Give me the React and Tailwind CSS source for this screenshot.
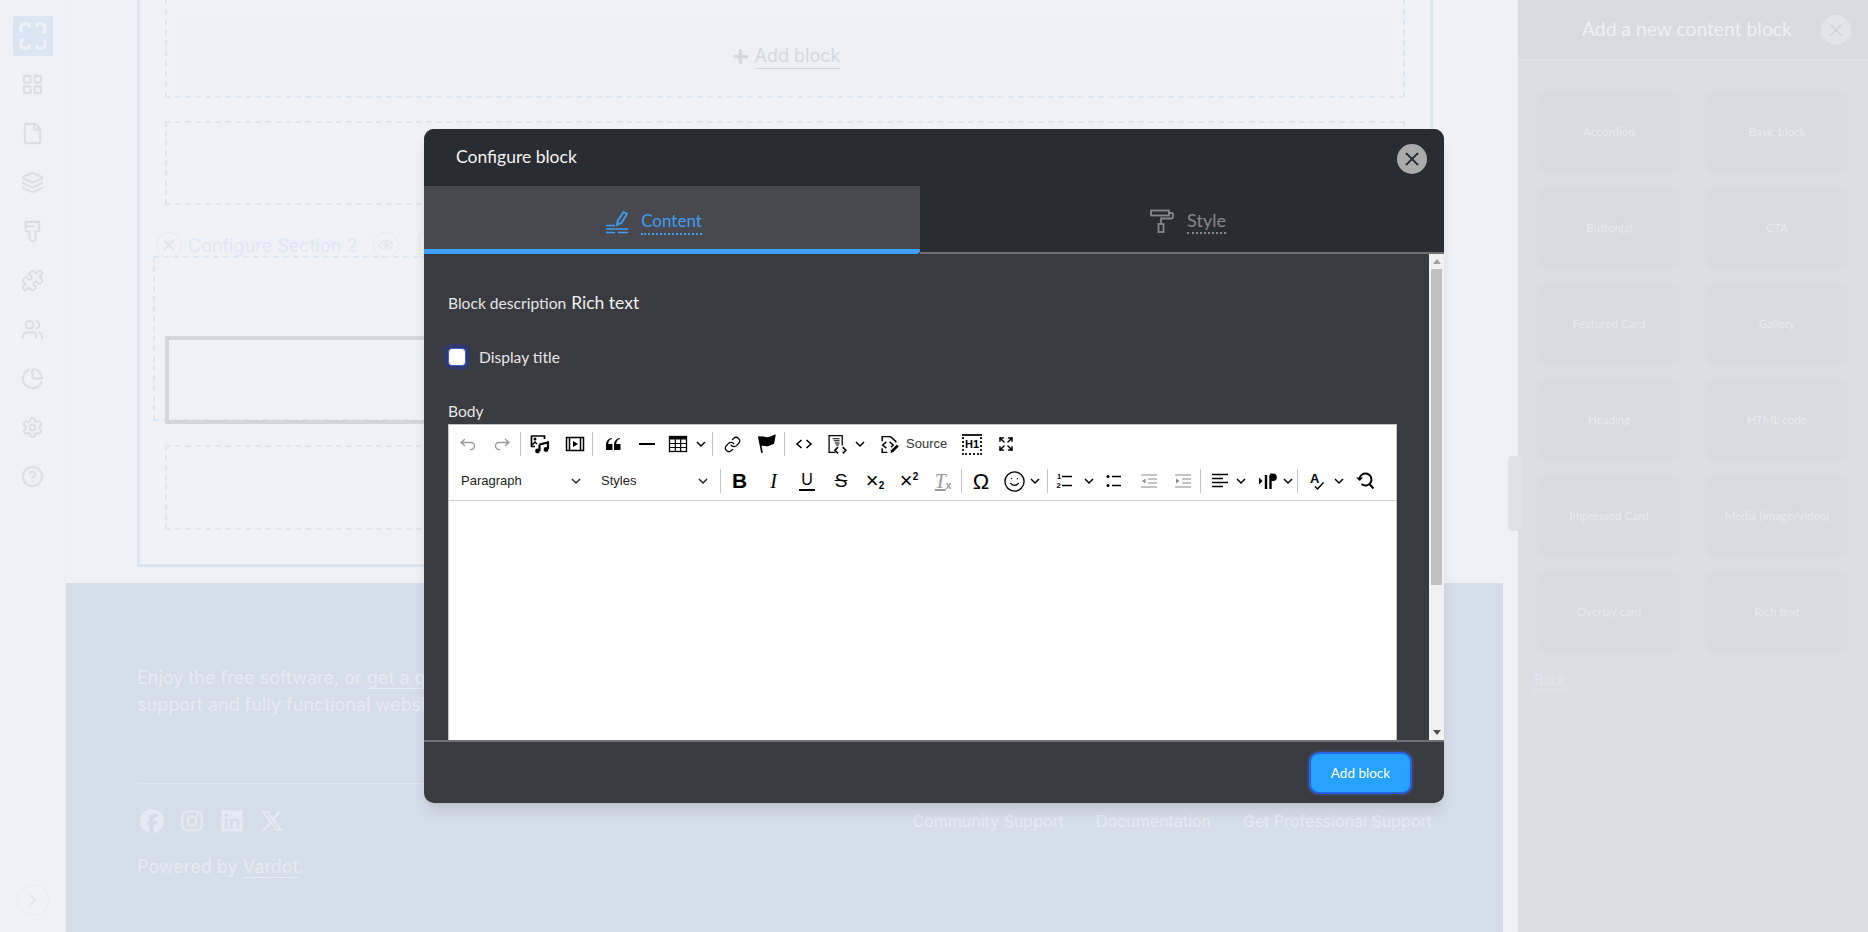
import React from 'react';
import { LayoutGrid, File, Layers, Puzzle, Users, ChartPie, Settings, CircleHelp, ChevronRight, Eye, X, Plus, Link, Expand, Smile } from 'lucide-react';
import { FaFacebook, FaInstagram, FaLinkedin, FaXTwitter } from 'react-icons/fa6';

const Ico = ({ children, className = 'w-5 h-5' }) => (
    <svg viewBox="0 0 20 20" fill="none" stroke="currentColor" strokeWidth="1.5" className={className}>{children}</svg>
);

const Chevron = () => (
    <svg viewBox="0 0 10 10" fill="none" stroke="currentColor" strokeWidth="1.5" className="w-[10px] h-[10px]"><path d="M1 3l4 4 4-4" /></svg>
);

const Sep = () => <span className="w-[3px] h-6 flex justify-center shrink-0"><span className="w-px h-full bg-[#c4c4c4]" /></span>;

const Tool = ({ className, children }) => (
    <span className={`flex items-center justify-center shrink-0 h-full ${className}`}>{children}</span>
);

const TopRow = () => (
    <div className="flex items-center h-[38px] pl-[2px]">
        <Tool className="w-[34px] text-[#9a9a9a]">
            <Ico><path d="M7 5L3 8.5l4 3.5M3.5 8.5H13a3.5 3.5 0 0 1 0 7h-1" strokeWidth="1.3" /></Ico>
        </Tool>
        <Tool className="w-[34px] text-[#9a9a9a]">
            <Ico><path d="M13 5l4 3.5-4 3.5M16.5 8.5H7a3.5 3.5 0 0 0 0 7h1" strokeWidth="1.3" /></Ico>
        </Tool>
        <Sep />
        <Tool className="w-[36px]">
            <Ico>
                <path d="M8 2H1.5v10.500H5M8 2h6.500v3" strokeWidth="1.700" />
                <path d="M2 11l3-3 2 2" strokeWidth="1.500" />
                <circle cx="5" cy="5" r="1.500" fill="currentColor" stroke="none" />
                <path d="M9.500 10.500L18 8.500V15M9.500 10.500V17" strokeWidth="2.200" />
                <circle cx="7.500" cy="17" r="2.400" fill="currentColor" stroke="none" />
                <circle cx="16" cy="15.500" r="2.400" fill="currentColor" stroke="none" />
            </Ico>
        </Tool>
        <Tool className="w-[33px]">
            <Ico>
                <rect x="1.500" y="3.500" width="17" height="13" strokeWidth="1.500" />
                <path d="M4.500 3.500v13M15.500 3.500v13" strokeWidth="1.500" />
                <path d="M8 7l5 3-5 3z" fill="currentColor" stroke="none" />
            </Ico>
        </Tool>
        <Sep />
        <Tool className="w-[38px]">
            <Ico>
                <path stroke="none" fill="currentColor" d="M3 10.423a6.5 6.5 0 0 1 6.056-6.408l.038.67C6.448 5.423 5.354 7.663 5.220 10H9c.552 0 .5.432.5.986v4.511c0 .554-.448.503-1 .503h-5c-.552 0-.5-.449-.5-1.003v-4.574zm8 0a6.5 6.5 0 0 1 6.056-6.408l.038.67c-2.646.739-3.74 2.979-3.873 5.315H17c.552 0 .5.432.5.986v4.511c0 .554-.448.503-1 .503h-5c-.552 0-.5-.449-.5-1.003v-4.574z" />
            </Ico>
        </Tool>
        <Tool className="w-[30px]">
            <Ico><path d="M2 10h16" strokeWidth="2" /></Ico>
        </Tool>
        <Tool className="w-[28px] pl-[3px]">
            <Ico>
                <rect x="1.500" y="2.500" width="17" height="15" strokeWidth="1.300" />
                <path d="M2 4h16" strokeWidth="3" />
                <path d="M2 9.500h16M2 13.500h16M7.300 5v12M12.700 5v12" strokeWidth="1.200" />
            </Ico>
        </Tool>
        <Tool className="w-[21px]"><Chevron /></Tool>
        <Sep />
        <Tool className="w-[36px]"><Link className="w-[17px] h-[17px]" strokeWidth={1.7} /></Tool>
        <Tool className="w-[33px]">
            <Ico className="w-[22px] h-[22px]">
                <path d="M2.500 3l3 15" strokeWidth="1.500" />
                <path stroke="none" fill="currentColor" d="M2.500 3.500C6 1.500 9 5 12.500 3.500c2-.8 3.500-1.500 5.500-2.300l-1.500 8.500c-2.500 1-4 1.800-6 2.300-2.500.5-4-1-6.500 0z" />
            </Ico>
        </Tool>
        <Sep />
        <Tool className="w-[36px]">
            <Ico><path d="M7.500 6L3 10l4.500 4M12.500 6L17 10l-4.500 4" strokeWidth="1.600" /></Ico>
        </Tool>
        <Tool className="w-[30px]">
            <Ico className="w-[21px] h-[21px]">
                <path d="M8 17.500H2V1.500h12.500V11" strokeWidth="1.200" />
                <path d="M5.500 4.500h6.500M6.500 6.500h5.500M7.500 8.500h4.500M8.500 10.500h3" strokeWidth="1" />
                <path d="M10.500 12.500L7.500 15.500l3 3M15 12.500l3 3-3 3" strokeWidth="1.500" />
            </Ico>
        </Tool>
        <Tool className="w-[16px]"><Chevron /></Tool>
        <Tool className="w-[38px] pl-[4px]">
            <Ico className="w-[21px] h-[21px]">
                <path d="M3 7V2.500h8l5 4.500v1M3 13.500v4h5" strokeWidth="1.400" />
                <path d="M7 7.500L3.500 10.500 7 13.500M10 7.500l3.500 3L11.500 12.500" strokeWidth="1.400" />
                <path d="M11 18l.5-2.500 5.500-5.500 1.800 1.800-5.500 5.500z" fill="currentColor" stroke="none" />
            </Ico>
        </Tool>
        <Tool className="w-[49px] justify-start! text-[13px] text-[#333]">Source</Tool>
        <Tool className="w-[34px]">
            <span className="w-[20px] h-[21px] border-2 border-dotted [border-top-style:solid] border-[#222] flex items-center justify-center text-[11px] font-bold leading-none">H1</span>
        </Tool>
        <Tool className="w-[34px]"><Expand className="w-[16px] h-[16px]" strokeWidth={2.200} /></Tool>
    </div>
);

const BottomRow = () => (
    <div className="flex items-center h-[38px] pl-[2px] pb-px border-b border-[#ccced1]">
        <Tool className="w-[139px] justify-between! pl-[10px] pr-[9px] text-[13px] text-[#222]">Paragraph<Chevron /></Tool>
        <Tool className="w-[129px] justify-between! pl-[11px] pr-[11px] text-[13px] text-[#222]">Styles<Chevron /></Tool>
        <Sep />
        <Tool className="w-[35px] text-[21px] font-bold">B</Tool>
        <Tool className="w-[33px] text-[20px] italic font-['Liberation_Serif']">I</Tool>
        <Tool className="w-[34px]"><span className="border-b-2 border-black text-[16px] leading-[18px] px-[2px]">U</span></Tool>
        <Tool className="w-[34px] text-[19px] line-through">S</Tool>
        <Tool className="w-[34px] text-[22px] leading-none">×<span className="text-[10px] font-bold mt-[10px]">2</span></Tool>
        <Tool className="w-[34px] text-[22px] leading-none">×<span className="text-[10px] font-bold -mt-[8px]">2</span></Tool>
        <Tool className="w-[34px] text-[#9a9a9a]">
            <span className="text-[20px] italic font-['Liberation_Serif'] underline">T</span><span className="text-[10px] font-bold mt-[8px]">x</span>
        </Tool>
        <Sep />
        <Tool className="w-[36px] text-[22px]">Ω</Tool>
        <Tool className="w-[30px]"><Smile className="w-[23px] h-[23px]" strokeWidth={1.400} /></Tool>
        <Tool className="w-[12px] mr-[5px]"><Chevron /></Tool>
        <Sep />
        <Tool className="w-[32px]">
            <Ico>
                <text x="2" y="8" fontSize="7.500" fontWeight="bold" fill="currentColor" stroke="none">1</text>
                <text x="1.500" y="17" fontSize="7.500" fontWeight="bold" fill="currentColor" stroke="none">2</text>
                <path d="M7 5.500h10M7 14.500h10" />
            </Ico>
        </Tool>
        <Tool className="w-[16px]"><Chevron /></Tool>
        <Tool className="w-[34px]">
            <Ico>
                <circle cx="4" cy="5.500" r="1.500" fill="currentColor" stroke="none" />
                <circle cx="4" cy="14.500" r="1.500" fill="currentColor" stroke="none" />
                <path d="M8 5.500h9M8 14.500h9" />
            </Ico>
        </Tool>
        <Tool className="w-[35px] text-[#8a8a8a]">
            <Ico>
                <path d="M2 4h16M9 8h9M9 12h9M2 16h16" strokeWidth="1.200" />
                <path d="M6.500 7.500v5L3 10z" fill="currentColor" stroke="none" />
            </Ico>
        </Tool>
        <Tool className="w-[33px] text-[#8a8a8a]">
            <Ico>
                <path d="M2 4h16M9 8h9M9 12h9M2 16h16" strokeWidth="1.200" />
                <path d="M3 7.500v5L6.500 10z" fill="currentColor" stroke="none" />
            </Ico>
        </Tool>
        <Sep />
        <Tool className="w-[31px] pl-[5px]">
            <Ico><path d="M2 3.500h16M2 7.500h11M2 11.500h16M2 15.500h11" strokeWidth="1.500" /></Ico>
        </Tool>
        <Tool className="w-[16px]"><Chevron /></Tool>
        <Tool className="w-[31px] pl-[5px]">
            <Ico>
                <path d="M2 6.500l3.500 3.500L2 13.500z" fill="currentColor" stroke="none" />
                <path d="M9 4v14M13.500 4v14" strokeWidth="2.400" />
                <path d="M7 2.500h9a3.800 3.800 0 0 1 0 7.600h-3V2.500z" fill="currentColor" stroke="none" />
            </Ico>
        </Tool>
        <Tool className="w-[16px]"><Chevron /></Tool>
        <Sep />
        <Tool className="w-[32px] pl-[4px]">
            <Ico>
                <text x="3" y="12" fontSize="13" fontWeight="bold" fill="currentColor" stroke="none">A</text>
                <path d="M8 15.500l2.500 2.500 6-6.500" strokeWidth="1.500" />
            </Ico>
        </Tool>
        <Tool className="w-[16px]"><Chevron /></Tool>
        <Tool className="w-[36px]">
            <Ico>
                <path d="M4.500 8a6 6 0 1 1 2 5M14 12.500l4.500 5" strokeWidth="2" />
                <path d="M1 6.500l3.800 3.500L8 6.500z" fill="currentColor" stroke="none" />
            </Ico>
        </Tool>
    </div>
);

const ConfigureBlockDialog = () => (
    <div className="absolute left-[424px] top-[129px] w-[1020px] h-[674px] rounded-[10px] overflow-hidden flex flex-col bg-[#3a3b40] font-['Lato',sans-serif] shadow-lg">
        <div className="h-[57px] shrink-0 bg-[#2a2c34] flex items-center justify-between pl-[32px] pr-[17px]">
            <h2 className="text-[17.500px] text-[#f2f2f2] -mt-[1px]">Configure block</h2>
            <button className="w-[30px] h-[30px] mt-[2px] rounded-full bg-[#ababab] text-[#2a2c34] flex items-center justify-center">
                <X className="w-[22px] h-[22px]" strokeWidth={2} />
            </button>
        </div>
        <div className="h-[68px] shrink-0 flex bg-[#2a2c34]">
            <div className="w-[496px] bg-[#48494e] border-b-[5px] border-[#3fa1fb] rounded-br-sm flex items-center justify-center gap-[13px] text-[#3f9df2] pr-[36px] pt-[8px]">
                <svg viewBox="0 0 22 24" fill="none" stroke="currentColor" strokeWidth="1.500" className="w-[22px] h-[24px]">
                    <path d="M0 15.500h9M0 19h22M0 22.500h9M12 22.500h10" />
                    <path d="M11 15l.8-4.500L17.500 2l3.500 2-5.500 8.800z" strokeWidth="1.800" />
                </svg>
                <span className="text-[17px] leading-[24px] border-b-2 border-dotted border-[#3f9df2]">Content</span>
            </div>
            <div className="flex-1 border-b-2 border-[#6f7074] flex items-center justify-center gap-[13px] text-[#85878c] pl-[12px] pt-[3px]">
                <svg viewBox="0 0 24 24" fill="none" stroke="currentColor" strokeWidth="1.800" className="w-[24px] h-[24px]">
                    <rect x="1" y="1.500" width="18" height="5" />
                    <path d="M19 4h2.500a1.500 1.500 0 0 1 1.500 1.500V8a1.500 1.500 0 0 1-1.500 1.500H11V15" />
                    <rect x="8.500" y="15" width="5" height="8" />
                </svg>
                <span className="text-[18px] leading-[24px] border-b-2 border-dotted border-[#85878c]">Style</span>
            </div>
        </div>
        <div className="flex-1 min-h-0 flex">
            <div className="flex-1 min-w-0 pl-[24px] overflow-hidden">
                <div className="flex items-baseline gap-[5px] mt-[36px] h-[24px] text-[#e6e6e7]">
                    <span className="text-[15.600px]">Block description</span>
                    <span className="text-[17.500px] text-[#f0f0f0]">Rich text</span>
                </div>
                <div className="flex items-center h-[24px] mt-[32px] text-[15.600px] text-[#e6e6e7]">
                    <span className="w-[18px] h-[18px] -mt-[2px] rounded-[4px] bg-white border border-[#3f5bd0] ring-4 ring-[#2d3a6b]" />
                    <span className="ml-[13px]">Display title</span>
                </div>
                <div className="mt-[29px] h-[24px] text-[15.600px] leading-[24px] text-[#e6e6e7]">Body</div>
                <div className="mt-[1px] w-[949px] h-[317px] bg-white border-x border-t border-[#c4c4c4] text-black font-['Liberation_Sans',sans-serif]">
                    <TopRow />
                    <BottomRow />
                </div>
            </div>
            <div className="w-[15px] shrink-0 bg-[#f1f1f1] flex flex-col items-center">
                <div className="h-[15px] shrink-0 flex items-center justify-center">
                    <span className="border-x-[4px] border-b-[5px] border-x-transparent border-b-[#a3a3a3]" />
                </div>
                <div className="w-[11px] h-[316px] bg-[#c1c1c1]" />
                <div className="mt-auto h-[15px] shrink-0 flex items-center justify-center">
                    <span className="border-x-[4px] border-t-[5px] border-x-transparent border-t-[#505050]" />
                </div>
            </div>
        </div>
        <div className="h-[63px] shrink-0 border-t-2 border-[#6f7074] flex items-center justify-end pr-[32px]">
            <button className="w-[103px] h-[42px] pt-px rounded-[10px] bg-[#26a2ff] border-2 border-[#2563eb] text-[13.500px] text-white ring-2 ring-[#40465e]">Add block</button>
        </div>
    </div>
);

const blocks = ['Accordion', 'Basic block', 'Button(s)', 'CTA', 'Featured Card', 'Gallery', 'Heading', 'HTML code', 'Impressed Card', 'Media (image/video)', 'Overlay card', 'Rich text'];

const BlockPanel = () => (
    <aside className="w-[350px] shrink-0 h-full bg-[#dcdde2] font-['Lato',sans-serif]">
        <div className="h-[60px] bg-[#d9dae0] border-b border-[#e3e4e9] flex items-center pl-[64px] pr-[17px] justify-between">
            <h3 className="text-[19.300px] text-[#eef0f4] -mt-[1px]">Add a new content block</h3>
            <span className="w-[30px] h-[30px] rounded-full bg-[#e3e4e9] text-[#d2d3d9] flex items-center justify-center"><X className="w-[20px] h-[20px]" /></span>
        </div>
        <div className="grid grid-cols-[144px_144px] gap-x-[24px] gap-y-[16px] pl-[19px] pt-[32px]">
            {blocks.map((block) => (
                <div key={block} className="h-[80px] rounded-lg bg-[#d9dae0] flex items-center justify-center text-[11.700px] text-[#e8e9ed]">{block}</div>
            ))}
        </div>
        <a className="inline-block ml-[16px] mt-[18px] text-[15px] text-[#dde5f2] border-b-2 border-dotted border-[#dde5f2] leading-[19px]">Back</a>
    </aside>
);

const sideIcons = [LayoutGrid, File, Layers, null, Puzzle, Users, ChartPie, Settings, CircleHelp];

const Sidebar = () => (
    <nav className="w-[66px] shrink-0 h-full flex flex-col items-center border-r border-[#eceef3] text-[#dcdee4]">
        <div className="w-10 h-10 mt-4 ml-[1px] rounded-[3px] bg-[#dbe4f3] text-[#eef1f6] flex items-center justify-center">
            <svg viewBox="0 0 28 28" fill="none" stroke="currentColor" strokeWidth="3" className="w-[28px] h-[28px]">
                <path d="M2 10V5a3 3 0 0 1 3-3h5v3M18 5V2h5a3 3 0 0 1 3 3v5h-3M26 18v5a3 3 0 0 1-3 3h-5v-3M10 23v3H5a3 3 0 0 1-3-3v-5h3" />
            </svg>
        </div>
        <div className="mt-[4px] flex flex-col items-center">
            {sideIcons.map((Icon, i) => (
                <span key={i} className="h-[49px] flex items-center justify-center">
                    {Icon ? <Icon className="w-[23px] h-[23px]" strokeWidth={2.200} /> : (
                        <svg viewBox="0 0 24 24" fill="none" stroke="currentColor" strokeWidth="2.200" className="w-[23px] h-[23px]">
                            <path d="M5 2h14v8a2 2 0 0 1-2 2h-2v7a3 3 0 0 1-6 0v-7H7a2 2 0 0 1-2-2z" />
                            <path d="M5 6.500h9" />
                        </svg>
                    )}
                </span>
            ))}
        </div>
        <span className="mt-auto mb-[16px] w-[32px] h-[32px] rounded-full border border-[#e9ebf0] flex items-center justify-center text-[#dfe2e8]">
            <ChevronRight className="w-[18px] h-[18px]" strokeWidth={2} />
        </span>
    </nav>
);

const PageContent = () => (
    <div className="h-[583px] shrink-0 pl-[71px] overflow-hidden">
        <div className="w-[1296px] h-[569px] border-x-[3px] border-b-[3px] border-[#dce5f2] px-[25px] text-[#d5d8df]">
            <div className="h-[100px] -mt-[2px] border-2 border-dashed border-[#dce5f2] pl-[12px] pr-[12px] pt-[14px]">
                <div className="h-full bg-[#eef0f5] flex items-center justify-center gap-[4px] pt-[2px]">
                    <Plus className="w-[21px] h-[21px]" strokeWidth={4} />
                    <span className="text-[18px] leading-[25px] border-b border-[#d5d8df]">Add block</span>
                </div>
            </div>
            <div className="h-[84px] mt-[23px] border-2 border-dashed border-[#e2e4ea]" />
            <div className="flex items-center h-[26px] mt-[27px] -mb-[2px] -ml-[9px] relative">
                <span className="w-[26px] h-[26px] rounded-full border border-[#e6e8ee] text-[#e3e5ec] flex items-center justify-center"><X className="w-[18px] h-[18px]" strokeWidth={3} /></span>
                <span className="ml-[6px] text-[18px] text-[#dfe6f5]">Configure Section 2</span>
                <span className="ml-[16px] w-[26px] h-[26px] rounded-full border border-[#e6e8ee] text-[#e3e5ec] flex items-center justify-center"><Eye className="w-[16px] h-[16px]" strokeWidth={2} /></span>
                <span className="ml-[20px] w-[26px] h-[26px] rounded-[3px] border border-[#e6e8ee]" />
            </div>
            <div className="h-[165px] -mx-[12px] border-2 border-dashed border-[#dce5f2] pt-[78px] px-[10px]">
                <div className="h-[88px] border-[4px] border-[#d3d5da]" />
            </div>
            <div className="h-[85px] mt-[24px] border-2 border-dashed border-[#e2e4ea]" />
        </div>
    </div>
);

const Footer = () => (
    <footer className="flex-1 bg-[#d6ddea] pl-[71px] pr-[70px] text-[#e6eaf2] text-[18px] leading-[27px]">
        <p className="pt-[81px]">Enjoy the free software, or <a className="border-b border-[#e6eaf2]">get a quote</a> for<br />support and fully functional website.</p>
        <div className="mt-[65px] h-px bg-[#dfe4ee]" />
        <div className="flex items-center justify-between mt-[25px] h-[24px]">
            <div className="flex items-center gap-[16px] pl-[3px]">
                <FaFacebook className="w-6 h-6" />
                <FaInstagram className="w-6 h-6" />
                <FaLinkedin className="w-6 h-6" />
                <FaXTwitter className="w-6 h-6" />
            </div>
            <div className="flex items-center gap-[32px] pr-px text-[16px]">
                <span>Community Support</span>
                <span>Documentation</span>
                <span>Get Professional Support</span>
            </div>
        </div>
        <p className="mt-[20px]">Powered by <a className="border-b border-[#e6eaf2]">Vardot</a>.</p>
    </footer>
);

const App = () => {
    return (
        <div className="relative w-[1868px] h-[932px] overflow-hidden flex bg-[#eff1f6] font-['Inter',sans-serif]">
            <Sidebar />
            <main className="w-[1437px] shrink-0 h-full flex flex-col">
                <PageContent />
                <Footer />
            </main>
            <div className="w-[15px] shrink-0" />
            <BlockPanel />
            <span className="absolute left-[1508px] top-[456px] w-[14px] h-[75px] rounded-l-[4px] bg-[#e0e1e6]" />
            <ConfigureBlockDialog />
        </div>
    );
};

export default App;
